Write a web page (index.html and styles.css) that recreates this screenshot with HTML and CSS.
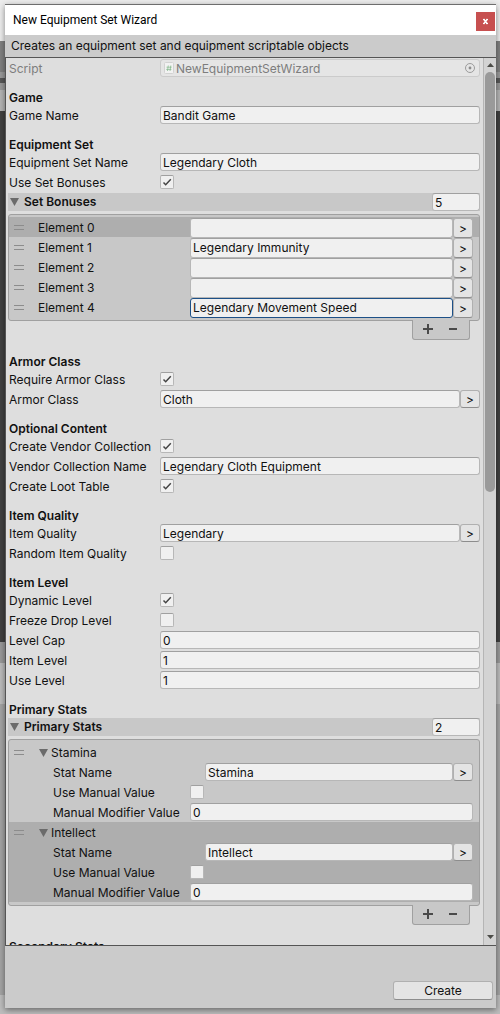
FILE: index.html
```html
<!DOCTYPE html>
<html lang="en">
<head>
<meta charset="utf-8">
<meta name="viewport" content="width=device-width, initial-scale=1">
<title>New Equipment Set Wizard</title>
<link rel="stylesheet" href="styles.css">
</head>
<body>
<main class="window">
  <header class="titlebar">
    <h1 class="title">New Equipment Set Wizard</h1>
    <button class="close" type="button" aria-label="Close">
      <svg width="19" height="19" viewBox="0 0 19 19" aria-hidden="true"><path d="M7.500 7l4 5M11.500 7l-4 5" stroke="#fff" stroke-width="1.500"/><path d="M7 7.500h2M10.500 7.500h1.500M7 11.500h1.500M10 11.500h2" stroke="#fff" stroke-width="1"/></svg>
    </button>
  </header>
  <p class="help">Creates an equipment set and equipment scriptable objects</p>

  <form class="body" id="wizard">
    <div class="content">
      <div class="row disabled">
        <label class="label" for="script">Script</label>
        <div class="object">
          <svg width="10" height="12" viewBox="0 0 10 12" aria-hidden="true"><rect x=".5" y=".5" width="9" height="11" rx="1" fill="#f2f2f2" stroke="#d2d2d2"/><path d="M4.300 3.500L3.500 9M6.800 3.500L6 9M2.500 5.200h5.200M2.200 7.400h5.200" stroke="#7db585" stroke-width=".7" fill="none"/></svg>
          <input class="object-name" id="script" value="NewEquipmentSetWizard" disabled>
          <svg width="12" height="12" viewBox="0 0 12 12" aria-hidden="true"><circle cx="6" cy="6" r="4.500" fill="none" stroke="#9b9b9b"/><circle cx="6" cy="6" r="1.400" fill="#8c8c8c"/></svg>
        </div>
      </div>

      <h2 class="heading">Game</h2>
      <div class="row"><label class="label" for="game">Game Name</label><input class="field" id="game" value="Bandit Game"></div>

      <h2 class="heading">Equipment Set</h2>
      <div class="row"><label class="label" for="setname">Equipment Set Name</label><input class="field" id="setname" value="Legendary Cloth"></div>
      <div class="row"><label class="label" for="bonuses">Use Set Bonuses</label><input class="check" type="checkbox" id="bonuses" checked></div>
      <div class="foldout">
        <button class="fold" type="button"><svg class="tri" width="9" height="8" viewBox="0 0 9 8" aria-hidden="true"><path d="M0 0h9L4.500 8z"/></svg>Set Bonuses</button>
        <input class="field count" value="5" aria-label="Set Bonuses size">
      </div>
      <div class="list">
        <div class="items">
          <div class="item selected"><span class="grip"></span><label class="slot-label" for="e0">Element 0</label><input class="field" id="e0"><button class="pick" type="button">&gt;</button></div>
          <div class="item"><span class="grip"></span><label class="slot-label" for="e1">Element 1</label><input class="field" id="e1" value="Legendary Immunity"><button class="pick" type="button">&gt;</button></div>
          <div class="item"><span class="grip"></span><label class="slot-label" for="e2">Element 2</label><input class="field" id="e2"><button class="pick" type="button">&gt;</button></div>
          <div class="item"><span class="grip"></span><label class="slot-label" for="e3">Element 3</label><input class="field" id="e3"><button class="pick" type="button">&gt;</button></div>
          <div class="item"><span class="grip"></span><label class="slot-label" for="e4">Element 4</label><input class="field active" id="e4" value="Legendary Movement Speed"><button class="pick" type="button">&gt;</button></div>
        </div>
        <div class="tools">
          <button class="tool" type="button" aria-label="Add"><svg width="10" height="10" viewBox="0 0 10 10"><path d="M5 0v10M0 5h10"/></svg></button>
          <button class="tool" type="button" aria-label="Remove"><svg width="10" height="10" viewBox="0 0 10 10"><path d="M1 5h8"/></svg></button>
        </div>
      </div>

      <h2 class="heading">Armor Class</h2>
      <div class="row"><label class="label" for="reqarmor">Require Armor Class</label><input class="check" type="checkbox" id="reqarmor" checked></div>
      <div class="row"><label class="label" for="armor">Armor Class</label><input class="field" id="armor" value="Cloth"><button class="pick" type="button">&gt;</button></div>

      <h2 class="heading">Optional Content</h2>
      <div class="row"><label class="label" for="vendor">Create Vendor Collection</label><input class="check" type="checkbox" id="vendor" checked></div>
      <div class="row"><label class="label" for="vendorname">Vendor Collection Name</label><input class="field" id="vendorname" value="Legendary Cloth Equipment"></div>
      <div class="row"><label class="label" for="loot">Create Loot Table</label><input class="check" type="checkbox" id="loot" checked></div>

      <h2 class="heading">Item Quality</h2>
      <div class="row"><label class="label" for="quality">Item Quality</label><input class="field" id="quality" value="Legendary"><button class="pick" type="button">&gt;</button></div>
      <div class="row"><label class="label" for="random">Random Item Quality</label><input class="check" type="checkbox" id="random"></div>

      <h2 class="heading">Item Level</h2>
      <div class="row"><label class="label" for="dynamic">Dynamic Level</label><input class="check" type="checkbox" id="dynamic" checked></div>
      <div class="row"><label class="label" for="freeze">Freeze Drop Level</label><input class="check" type="checkbox" id="freeze"></div>
      <div class="row"><label class="label" for="cap">Level Cap</label><input class="field" id="cap" value="0"></div>
      <div class="row"><label class="label" for="itemlevel">Item Level</label><input class="field" id="itemlevel" value="1"></div>
      <div class="row"><label class="label" for="uselevel">Use Level</label><input class="field" id="uselevel" value="1"></div>

      <h2 class="heading">Primary Stats</h2>
      <div class="foldout">
        <button class="fold" type="button"><svg class="tri" width="9" height="8" viewBox="0 0 9 8" aria-hidden="true"><path d="M0 0h9L4.500 8z"/></svg>Primary Stats</button>
        <input class="field count" value="2" aria-label="Primary Stats size">
      </div>
      <div class="list">
        <div class="items">
          <section class="stat">
            <div class="stat-head"><span class="grip"></span><button class="fold stat-fold" type="button"><svg class="tri" width="9" height="8" viewBox="0 0 9 8" aria-hidden="true"><path d="M0 0h9L4.500 8z"/></svg>Stamina</button></div>
            <div class="stat-row"><label class="stat-label wide" for="s1">Stat Name</label><input class="field" id="s1" value="Stamina"><button class="pick" type="button">&gt;</button></div>
            <div class="stat-row"><label class="stat-label" for="m1">Use Manual Value</label><input class="check" type="checkbox" id="m1"></div>
            <div class="stat-row"><label class="stat-label" for="v1">Manual Modifier Value</label><input class="field" id="v1" value="0"></div>
          </section>
          <section class="stat selected">
            <div class="stat-head"><span class="grip"></span><button class="fold stat-fold" type="button"><svg class="tri" width="9" height="8" viewBox="0 0 9 8" aria-hidden="true"><path d="M0 0h9L4.500 8z"/></svg>Intellect</button></div>
            <div class="stat-row"><label class="stat-label wide" for="s2">Stat Name</label><input class="field" id="s2" value="Intellect"><button class="pick" type="button">&gt;</button></div>
            <div class="stat-row"><label class="stat-label" for="m2">Use Manual Value</label><input class="check" type="checkbox" id="m2"></div>
            <div class="stat-row"><label class="stat-label" for="v2">Manual Modifier Value</label><input class="field" id="v2" value="0"></div>
          </section>
        </div>
        <div class="tools">
          <button class="tool" type="button" aria-label="Add"><svg width="10" height="10" viewBox="0 0 10 10"><path d="M5 0v10M0 5h10"/></svg></button>
          <button class="tool" type="button" aria-label="Remove"><svg width="10" height="10" viewBox="0 0 10 10"><path d="M1 5h8"/></svg></button>
        </div>
      </div>

      <h2 class="heading">Secondary Stats</h2>
    </div>
    <div class="scrollbar" aria-hidden="true">
      <svg width="7" height="4" viewBox="0 0 7 4"><path d="M0 4h7L3.500 0z"/></svg>
      <div class="track"><div class="thumb"></div></div>
      <svg width="7" height="4" viewBox="0 0 7 4"><path d="M0 0h7L3.500 4z"/></svg>
    </div>
  </form>

  <footer class="footer"><button class="create" type="submit" form="wizard">Create</button></footer>
</main>
</body>
</html>
```
FILE: styles.css
```css
* { box-sizing: border-box; }

body {
  margin: 0;
  height: 100vh;
  padding: 4px 4px 6px 5px;
  display: flex;
  font: 12px/18px Inter, "Liberation Sans", sans-serif;
  color: #111;
  background: linear-gradient(#ececec 41px, #808080 41px 72px, #999 72px 78px, #585858 78px 83px, #999 83px 90px, #b4b4b4 90px 111px, #404040 111px 642px, #999 642px 663px, #bbb 663px 704px, #a4a4a4 704px 995px, #bdbdbd 995px);
}

button, input { font: inherit; color: inherit; margin: 0; }
button { padding: 0; border: 0; background: none; }
h1, h2, p { margin: 0; }

.window {
  flex: 1;
  min-width: 0;
  display: flex;
  flex-direction: column;
  background: #cbcbcb;
  border-top: 1px solid #6e6e6e;
  box-shadow: 0 2px 6px rgba(0, 0, 0, .45);
}

.titlebar {
  flex: none;
  height: 30px;
  padding: 0 1px 0 8px;
  display: flex;
  justify-content: space-between;
  align-items: center;
  background: #fff;
}
.title { font: 12px/18px Roboto, "Open Sans", sans-serif; color: #000; }
.close { width: 19px; height: 19px; margin-top: 2px; background: #c75050; }
.close svg { display: block; }

.help { flex: none; height: 22px; padding-left: 6px; line-height: 22px; }

.body {
  flex: 1;
  min-height: 0;
  display: flex;
  background: #dedede;
  border: solid #555;
  border-width: 1px 0 1px 1px;
}

.content {
  flex: 1;
  min-width: 0;
  overflow: hidden;
  padding: 1px 3px 0 2px;
}

.heading { height: 27px; font-size: 12px; font-weight: 600; line-height: 20px; padding: 9px 0 0 1px; }

.row { display: flex; height: 18px; margin-bottom: 2px; padding-left: 1px; }
.label { flex: none; width: 151px; white-space: nowrap; line-height: 20px; }
.disabled { color: #7d7d7d; }

.field {
  flex: 1;
  min-width: 0;
  height: 18px;
  padding: 1px 2px 0;
  border: 1px solid #b7b7b7;
  border-top-color: #a0a0a0;
  border-radius: 3px;
  background: #f0f0f0;
  outline: 0;
}
.active { border-color: #1d5087; }

.object {
  flex: 1;
  min-width: 0;
  display: flex;
  align-items: center;
  gap: 2px;
  padding: 0 3px;
  border: 1px solid #cbcbcb;
  border-radius: 3px;
  background: #e5e5e5;
}
.object-name { flex: 1; min-width: 0; height: 16px; padding: 1px 0 0; border: 0; background: none; }

.check {
  appearance: none;
  flex: none;
  width: 14px;
  height: 14px;
  margin-top: 2px;
  border: 1px solid #b7b7b7;
  border-top-color: #a0a0a0;
  border-radius: 2px;
  background: #f0f0f0;
}
.check:checked {
  background-image: url("data:image/svg+xml,%3Csvg xmlns='http://www.w3.org/2000/svg' viewBox='0 0 12 12'%3E%3Cpath d='M2.500 6.500L4.700 8.700L9.800 3.300' fill='none' stroke='%23444' stroke-width='1.500'/%3E%3C/svg%3E");
}

.pick {
  flex: none;
  width: 20px;
  height: 18px;
  border: 1px solid #b0b0b0;
  border-bottom-color: #8d8d8d;
  border-radius: 3px;
  background: #e4e4e4;
  line-height: 17px;
}

.foldout { display: flex; justify-content: space-between; height: 18px; background: #c8c8c8; }
.fold { display: flex; align-items: center; gap: 5px; padding-left: 2px; font-weight: 600; line-height: 20px; }
.tri { flex: none; fill: #6b6b6b; }
.count { flex: none; width: 48px; }

.list { margin: 3px 0; display: flex; flex-direction: column; align-items: flex-end; }
.items { align-self: stretch; padding: 2px 0 3px; border: 1px solid #a0a0a0; border-radius: 3px; background: #c8c8c8; }
.item { display: flex; height: 20px; padding: 1px 6px 0 5px; }
.item .field, .item .pick { height: 20px; }
.item .field { padding: 0 2px 1px; }
.selected { background: #aeaeae; }
.slot-label { flex: none; width: 152px; line-height: 20px; }
.grip { flex: none; width: 10px; height: 5px; margin: 7px 14px 0 0; border: solid #8c8c8c; border-width: 1px 0; }

.tools {
  display: flex;
  width: 58px;
  height: 20px;
  margin: -1px 10px 0 0;
  padding: 0 4px 1px 3px;
  border: 1px solid #a0a0a0;
  border-top: 0;
  border-radius: 0 0 3px 3px;
  background: #c8c8c8;
}
.tool { flex: 1; display: flex; align-items: center; justify-content: center; }
.tool svg { fill: none; stroke: #4a4a4a; stroke-width: 2; }

.stat { height: 80px; padding: 1px 6px 0 5px; }
.stat-head { display: flex; height: 20px; }
.stat-fold { height: 20px; gap: 3px; padding-left: 1px; font-weight: 400; }
.stat-row { display: flex; height: 20px; padding-left: 39px; }
.stat-label { flex: none; width: 137px; line-height: 20px; white-space: nowrap; }
.wide { width: 152px; }

.scrollbar {
  flex: none;
  width: 13px;
  padding: 5px 0 6px;
  display: flex;
  flex-direction: column;
  align-items: center;
  gap: 5px;
  border-left: 1px solid #b5b5b5;
  background: #d3d3d3;
}
.scrollbar svg { flex: none; fill: #4c4c48; }
.track { flex: 1; align-self: stretch; padding-left: 1px; }
.thumb { width: 10px; height: 49%; border-radius: 5px; background: #9a9a9a; }

.footer { flex: none; height: 62px; padding: 0 3px 8px; display: flex; justify-content: flex-end; align-items: flex-end; }
.create { width: 100px; height: 19px; border: 1px solid #b0b0b0; border-bottom-color: #8d8d8d; border-radius: 3px; background: #e4e4e4; line-height: 17px; }
```
